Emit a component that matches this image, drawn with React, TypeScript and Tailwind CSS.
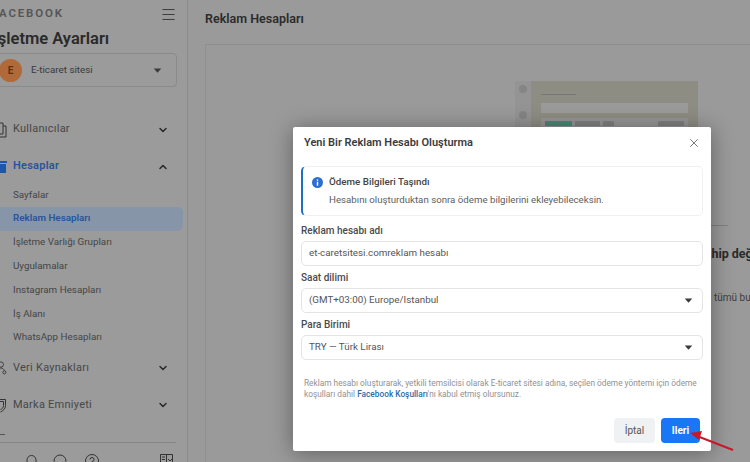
import { ChevronDown, ChevronUp, Menu, X } from "lucide-react";
import React from "react";

const Caret = () => (
  <svg width="9" height="5" viewBox="0 0 10 6" className="shrink-0">
    <path d="M0.5 0.5h9L5.6 5.2a.8.8 0 0 1-1.2 0z" fill="#3a3b3c" />
  </svg>
);

const NavRow = ({ label, icon, open, active }: { label: string; icon: React.ReactNode; open?: boolean; active?: boolean }) => (
  <div className="flex h-[37px] items-center pr-[18px]">
    <div className="mr-[6px] flex w-[7px] shrink-0 justify-end">{icon}</div>
    <div className={`flex-1 text-[11px] tracking-[0.25px] ${active ? "font-semibold text-[#28549b]" : "text-[#474747]"}`}>{label}</div>
    {open ? <ChevronUp size={12} strokeWidth={3} color="#2a2a2a" /> : <ChevronDown size={12} strokeWidth={3} color="#2a2a2a" />}
  </div>
);

const SubRow = ({ label, active }: { label: string; active?: boolean }) => (
  <div className={`flex h-[23.8px] w-[183px] items-center rounded-r-[5px] pl-[13px] text-[9.8px] ${active ? "bg-[#8795a8] font-semibold text-[#28549b]" : "text-[#454545]"}`}>
    {label}
  </div>
);

const Field = ({ label, value, select }: { label: string; value: string; select?: boolean }) => (
  <div className="mt-[4px]">
    <div className="h-[16px] text-[10px] leading-[16px] font-medium text-[#4a4b4d]">{label}</div>
    <div className="mt-[2px] flex h-[25px] w-[402px] items-center justify-between rounded-[5px] border border-[#e3e4e6] pr-[9px] pl-[7px] text-[9.8px] text-[#555]">
      <span>{value}</span>
      {select && <Caret />}
    </div>
  </div>
);

const Sidebar = () => (
  <aside className="h-[462px] w-[188px] shrink-0 overflow-hidden border-r border-[#8b8b8b] bg-[#9b9b9b] pt-[1px]">
    <div className="flex h-[26px] items-center justify-between pr-[10px]">
      <div className="-ml-[8px] text-[11.5px] font-semibold tracking-[1.8px] text-[#555]">FACEBOOK</div>
      <Menu size={17} strokeWidth={1.3} color="#333" />
    </div>
    <div className="-ml-[7px] text-[16.5px] leading-[24px] font-semibold whitespace-nowrap text-[#2a2a2a]">İşletme Ayarları</div>
    <div className="mt-[2px] -ml-2 flex h-[34px] w-[185px] items-center rounded-[4px] border border-[#8a8a8a] pr-[14px] pl-[6px]">
      <div className="flex h-[23px] w-[23px] items-center justify-center rounded-full bg-[#b06a39] text-[10px] font-semibold text-[#5a2f14]">E</div>
      <div className="ml-[9px] flex-1 text-[9.8px] text-[#3a3a3a]">E-ticaret sitesi</div>
      <Caret />
    </div>
    <div className="mt-[24px]">
      <NavRow
        label="Kullanıcılar"
        icon={
          <svg width="7" height="16" viewBox="0 0 7 16" fill="none" stroke="#333" strokeWidth="1">
            <path d="M-2 1h5v11h-5M3 4h3v11H-1" />
          </svg>
        }
      />
      <NavRow
        label="Hesaplar"
        active
        open
        icon={
          <svg width="7" height="12" viewBox="0 0 7 12" fill="#1f57a8">
            <path d="M0 0h7v2H0zM0 3h6v9H0z" />
          </svg>
        }
      />
    </div>
    <div className="-mt-[2px]">
      <SubRow label="Sayfalar" />
      <SubRow label="Reklam Hesapları" active />
      <SubRow label="İşletme Varlığı Grupları" />
      <SubRow label="Uygulamalar" />
      <SubRow label="Instagram Hesapları" />
      <SubRow label="İş Alanı" />
      <SubRow label="WhatsApp Hesapları" />
    </div>
    <NavRow
      label="Veri Kaynakları"
      icon={
        <svg width="8" height="16" viewBox="0 0 8 16" fill="none" stroke="#333" strokeWidth="1">
          <circle cx="1" cy="4" r="3" />
          <path d="M-3 13c0-3 2-5 4-5s3 1 4 3" />
          <circle cx="5" cy="13" r="1.800" />
        </svg>
      }
    />
    <NavRow
      label="Marka Emniyeti"
      icon={
        <svg width="7" height="15" viewBox="0 0 7 15" fill="none" stroke="#333" strokeWidth="1">
          <path d="M-3 1.500h8.500v6c0 3-2 5-5 6.500M-1 3.500h4.500v4c0 2-1 3-3 4" />
        </svg>
      }
    />
    <div className="mt-[10px] h-[8px] w-[5px] border-t border-[#555]" />
    <div className="h-px w-[176px] bg-[#858585]" />
    <div className="mt-[11px] flex items-start pr-[14px] pl-[26px]">
      <svg width="75" height="14" viewBox="0 0 75 14" fill="none" stroke="#333" strokeWidth="1" className="shrink-0">
        <path d="M1 13V6a4.500 4.500 0 0 1 9 0v7" />
        <circle cx="34" cy="7" r="6" />
        <circle cx="66" cy="7" r="6.500" />
        <path d="M64 5.500a2 2 0 1 1 2 2v1.500" />
      </svg>
      <svg width="13" height="12" viewBox="0 0 13 12" fill="none" stroke="#333" strokeWidth="1" className="ml-auto">
        <path d="M.5 .5h12v11H.5zM6.500 .5v11M2 3h3M2 5.500h3M8 5l2 2 2-2" />
      </svg>
    </div>
  </aside>
);

const Main = () => (
  <main className="h-[462px] min-w-0 flex-1 overflow-hidden pt-[9px] pl-[17px]">
    <h1 className="h-[20px] text-[12.5px] leading-[20px] font-semibold text-[#2b2b2b]">Reklam Hesapları</h1>
    <div className="mt-[15px] flex h-[430px] w-[600px] flex-col border border-[#8f8f8f] bg-[#9a9a9a]">
      <div className="mt-[36px] ml-[309px] flex h-[90px] w-[183px]">
        <div className="flex w-[16px] flex-col items-center gap-[18px] bg-[#949494] pt-[4px]">
          <div className="h-[8px] w-[8px] rounded-full bg-[#858585]" />
          <div className="h-[8px] w-[8px] rounded-full bg-[#858585]" />
        </div>
        <div className="flex-1 bg-[#8d8d84] px-[10px] pt-[13px]">
          <div className="h-px w-[35px] bg-[#777]" />
          <div className="mt-[8px] h-[10px] bg-[#9b9b9b]" />
          <div className="mt-[5px] flex h-[20px] items-start gap-[3px] bg-[#969696] px-[4px] pt-[3px]">
            <div className="h-[5px] w-[27px] bg-[#4a8a78]" />
            <div className="h-[5px] w-[25px] bg-[#808080]" />
            <div className="h-[5px] w-[11px] bg-[#808080]" />
            <div className="ml-auto h-[5px] w-[26px] bg-[#808080]" />
          </div>
        </div>
      </div>
      <div className="mt-[54px] ml-[505px] h-px w-[17px] bg-[#7f7f7f]" />
      <div className="mt-[20px] ml-[491px] text-[12.5px] leading-[16px] font-bold whitespace-nowrap text-[#2a2a2a]">Sahip değişikliği</div>
      <div className="mt-[29px] ml-[508px] text-[10px] leading-[14px] whitespace-nowrap text-[#3d3d3d]">tümü bu</div>
    </div>
  </main>
);

const Modal = () => (
  <div className="absolute top-[127px] left-[293px] h-[324px] w-[418px] rounded-[2px] bg-white px-[8px] shadow-[0_2px_22px_rgba(0,0,0,0.38)]">
    <div className="flex h-[31px] items-center justify-between pt-[1px] pr-[2px] pl-[3px]">
      <div className="text-[11px] font-semibold text-[#3a3b3e]">Yeni Bir Reklam Hesabı Oluşturma</div>
      <X size={14} strokeWidth={1.5} color="#666" />
    </div>
    <div className="mt-[8px] flex h-[50px] w-[402px] rounded-[5px] border border-l-2 border-[#f0f0f2] border-l-[#1c6fc4] pl-[9px]">
      <div className="flex h-full flex-col pt-[9px]">
        <div className="flex items-center gap-[6px] text-[9.8px] leading-[12px] font-medium text-[#444]">
          <svg width="11" height="11" viewBox="0 0 11 11">
            <circle cx="5.500" cy="5.500" r="5.500" fill="#2b6fd0" />
            <rect x="4.800" y="4.700" width="1.400" height="4" fill="#fff" />
            <rect x="4.800" y="2.400" width="1.400" height="1.400" fill="#fff" />
          </svg>
          Ödeme Bilgileri Taşındı
        </div>
        <div className="mt-[5px] ml-[17px] text-[9.7px] leading-[14px] text-[#5c5e62]">Hesabını oluşturduktan sonra ödeme bilgilerini ekleyebileceksin.</div>
      </div>
    </div>
    <div className="mt-[7px]">
      <Field label="Reklam hesabı adı" value="et-caretsitesi.comreklam hesabı" />
      <Field label="Saat dilimi" value="(GMT+03:00) Europe/Istanbul" select />
      <Field label="Para Birimi" value="TRY — Türk Lirası" select />
    </div>
    <p className="mt-[18px] ml-[3px] w-[402px] text-[8.3px] leading-[11px] text-[#8f9195]">
      Reklam hesabı oluşturarak, yetkili temsilcisi olarak E-ticaret sitesi adına, seçilen ödeme yöntemi için ödeme koşulları dahil{" "}
      <span className="font-medium text-[#2a6da8]">Facebook Koşulları</span>'nı kabul etmiş olursunuz.
    </p>
    <div className="mt-[18px] flex justify-end gap-[6px] pr-[3px]">
      <div className="flex h-[25px] w-[41px] items-center justify-center rounded-[4px] bg-[#f0f1f2] text-[10px] text-[#555]">İptal</div>
      <div className="flex h-[25px] w-[39px] items-center justify-center rounded-[4px] bg-[#1877f2] text-[10px] font-bold text-white">Ileri</div>
    </div>
  </div>
);

export default function App() {
  return (
    <div className="relative flex h-[462px] w-[750px] overflow-hidden bg-[#9a9a9a]" style={{ fontFamily: "Roboto, sans-serif" }}>
      <Sidebar />
      <Main />
      <Modal />
      {/* red arrow drawn on top of the screenshot */}
      <svg className="absolute top-[425px] left-[685px]" width="52" height="30" viewBox="0 0 52 30" fill="none">
        <path d="M48 25 12 11" stroke="#c8192b" strokeWidth="2" />
        <path d="M5 8l12-2-3 9z" fill="#c8192b" />
      </svg>
    </div>
  );
}
